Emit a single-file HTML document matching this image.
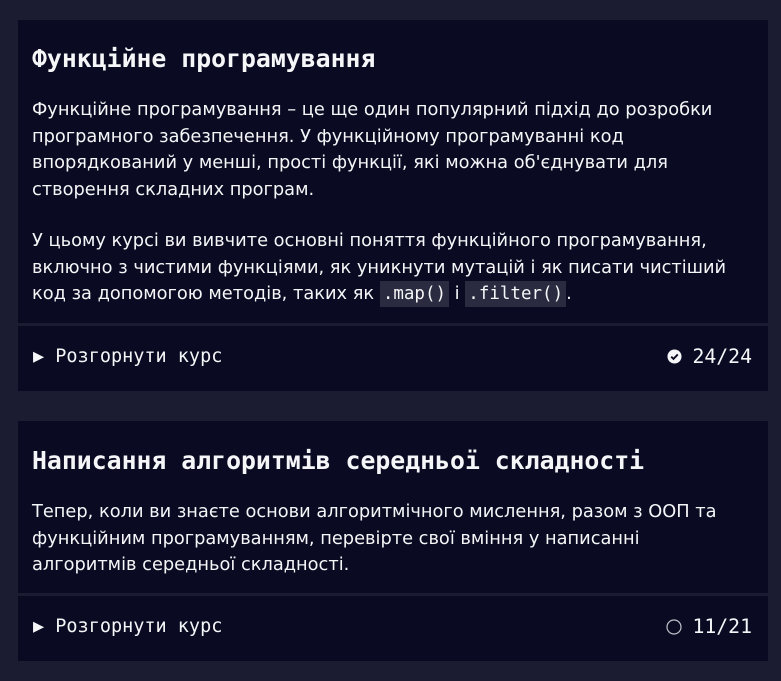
<!DOCTYPE html>
<html><head><meta charset="utf-8"><style>
body{margin:0;background:#1b1b32;width:781px;height:681px;overflow:hidden;font-family:"DejaVu Sans","Liberation Sans",sans-serif;color:#f5f6f7}
.card{position:absolute;left:18px;width:750px;background:#0a0a23}
h2{margin:0;position:absolute;left:14px;font-family:"DejaVu Sans Mono","Liberation Mono",monospace;font-weight:bold;font-size:24.8px;white-space:nowrap}
p{margin:0;position:absolute;left:14px;width:740px;font-size:17.8px;line-height:26.7px;white-space:nowrap}
code{font-family:"DejaVu Sans Mono",monospace;font-size:17.5px;background:#2a2a40;padding:3px 3px}
.foot{position:absolute;left:18px;width:750px;background:#0a0a23;font-family:"DejaVu Sans Mono",monospace;font-size:18.5px}
.foot .l{position:absolute;left:15px;top:20px}
.foot .r{position:absolute;right:16px;top:19px;font-size:19.8px;display:flex;align-items:center;gap:10px}
</style></head><body>
<div class="card" style="top:20px;height:303px">
<h2 style="top:24px">Функційне програмування</h2>
<p style="top:77px">Функційне програмування – це ще один популярний підхід до розробки<br>програмного забезпечення. У функційному програмуванні код<br>впорядкований у менші, прості функції, які можна об'єднувати для<br>створення складних програм.</p>
<p style="top:208px">У цьому курсі ви вивчите основні поняття функційного програмування,<br>включно з чистими функціями, як уникнути мутацій і як писати чистіший<br>код за допомогою методів, таких як <code>.map()</code> і <code>.filter()</code>.</p>
</div>
<div class="foot" style="top:326px;height:65px"><span class="l">▶ Розгорнути курс</span><span class="r"><svg width="15" height="15" viewBox="0 0 16 16"><circle cx="8" cy="8" r="7.5" fill="#f5f6f7"/><path d="M4.5 8.2l2.4 2.4 4.6-4.8" stroke="#0a0a23" stroke-width="2" fill="none"/></svg>24/24</span></div>
<div class="card" style="top:421px;height:172px">
<h2 style="top:25px">Написання алгоритмів середньої складності</h2>
<p style="top:78px">Тепер, коли ви знаєте основи алгоритмічного мислення, разом з ООП та<br>функційним програмуванням, перевірте свої вміння у написанні<br>алгоритмів середньої складності.</p>
</div>
<div class="foot" style="top:596px;height:65px"><span class="l">▶ Розгорнути курс</span><span class="r"><svg width="16" height="16" viewBox="0 0 16 16"><circle cx="8" cy="8" r="7" fill="none" stroke="#c0c0c8" stroke-width="1.2"/></svg>11/21</span></div>
</body></html>
